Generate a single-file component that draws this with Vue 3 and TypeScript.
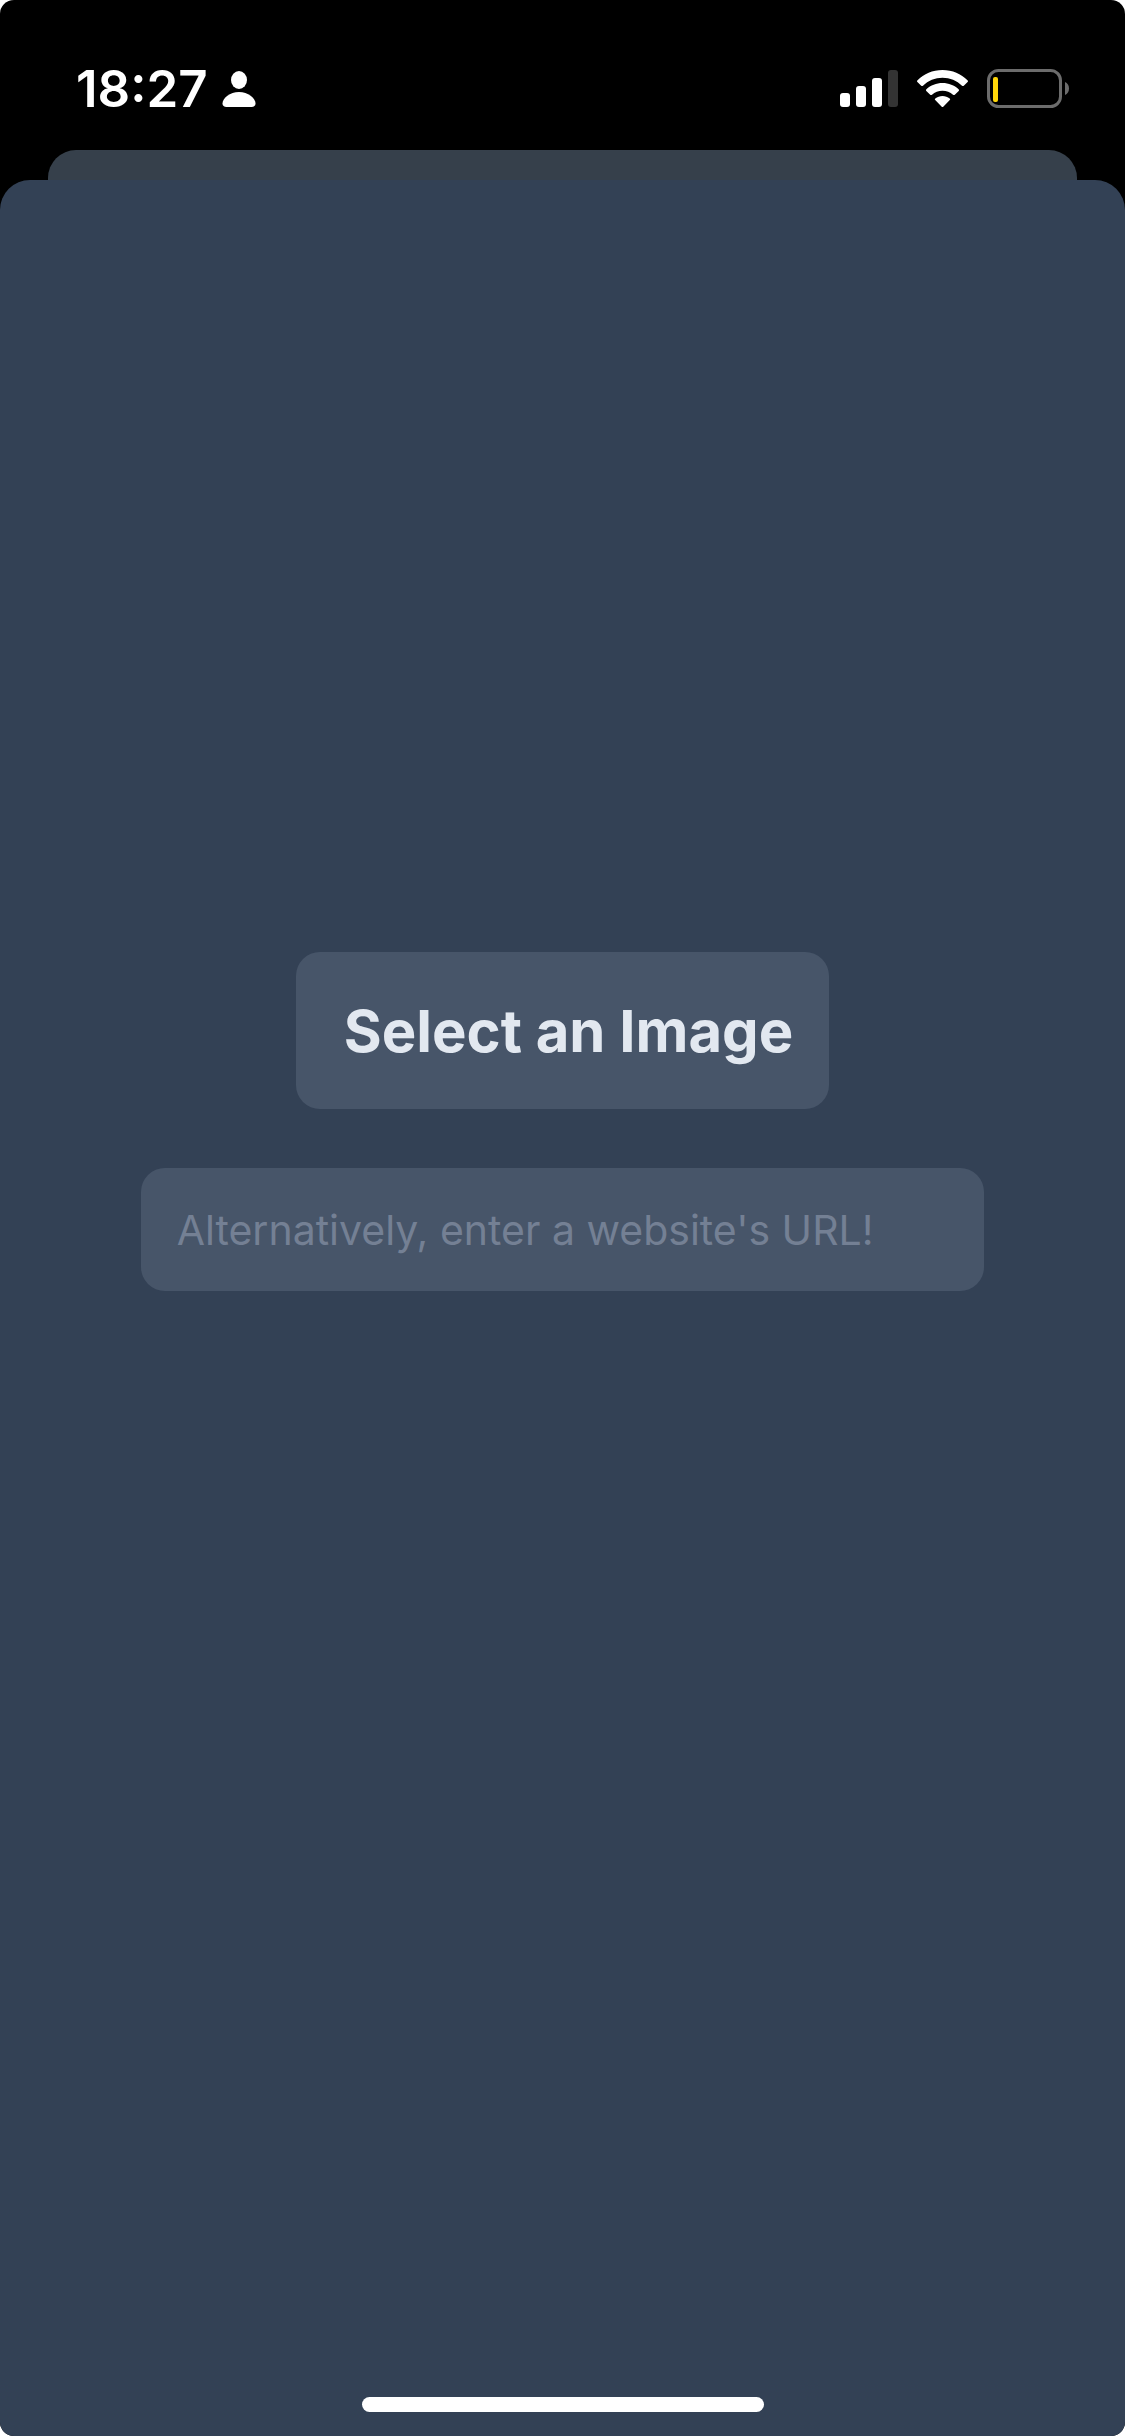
<script setup lang="ts">
import { ref } from 'vue'

const time = '18:27'
const url = ref('')
const picker = ref<HTMLInputElement | null>(null)

function selectImage(): void {
  picker.value?.click()
}
</script>

<template>
  <div class="screen">
    <header class="status">
      <div class="status-left">
        <time class="clock">{{ time }}</time>
        <svg class="person" width="34" height="36" viewBox="0 0 34 36" aria-hidden="true">
          <ellipse cx="17" cy="9" rx="8" ry="9" />
          <path d="M17 21C26 21 33.500 27 33.500 32.500C33.500 34.800 32 36 29.500 36H4.500C2 36 0.500 34.800 0.500 32.500C0.500 27 8 21 17 21Z" />
        </svg>
      </div>
      <div class="status-right">
        <svg width="58" height="38" viewBox="0 0 58 38" aria-hidden="true">
          <rect x="0" y="23" width="10" height="14" rx="3" />
          <rect x="16" y="16" width="10" height="21" rx="3" />
          <rect x="32" y="8" width="10" height="29" rx="3" />
          <rect class="dim" x="48" y="0" width="10" height="37" rx="3" />
        </svg>
        <svg width="51" height="38" viewBox="0 0 51 38" aria-hidden="true">
          <path d="M25.500 0C35.500 0 44 4 50.500 10.200C51.100 10.800 51.100 11.400 50.600 12L46.800 15.700C46.200 16.300 45.600 16.200 45 15.700C39.800 10.700 33 7.800 25.500 7.800S11.200 10.700 6 15.700C5.400 16.200 4.800 16.300 4.200 15.700L0.400 12C-0.100 11.400-0.100 10.800 0.500 10.200C7 4 15.500 0 25.500 0Z" />
          <path d="M25.500 13C31.700 13 37.300 15.300 41.600 19.200C42.200 19.800 42.200 20.400 41.700 20.900L37.800 24.700C37.200 25.300 36.600 25.200 36 24.700C33.200 22.200 29.500 20.700 25.500 20.700S17.800 22.200 15 24.700C14.400 25.200 13.800 25.300 13.200 24.700L9.300 20.900C8.800 20.400 8.800 19.800 9.400 19.200C13.700 15.300 19.300 13 25.500 13Z" />
          <path d="M25.500 26C28.200 26 30.700 26.900 32.700 28.400C33.300 28.900 33.300 29.500 32.800 30L26.500 36.400C25.800 37.100 25.200 37.100 24.500 36.400L18.200 30C17.700 29.500 17.700 28.900 18.300 28.400C20.300 26.900 22.800 26 25.500 26Z" />
        </svg>
        <svg width="83" height="40" viewBox="0 0 83 40" aria-hidden="true">
          <rect class="case" x="1.500" y="1.500" width="72" height="36" rx="10" />
          <rect class="charge" x="6" y="8" width="5" height="25" rx="2" />
          <path class="terminal" d="M78 13C80.500 14 82 16.500 82 19.500S80.500 25 78 26Z" />
        </svg>
      </div>
    </header>

    <div class="sheet-behind"></div>

    <main class="sheet">
      <form class="content" @submit.prevent>
        <input ref="picker" type="file" accept="image/*" aria-label="Image" hidden />
        <button class="select" type="button" @click="selectImage">Select an Image</button>
        <input
          v-model="url"
          class="url"
          type="url"
          aria-label="Website URL"
          placeholder="Alternatively, enter a website's URL!"
        />
      </form>
      <div class="home"></div>
    </main>
  </div>
</template>

<style>
body {
  margin: 0;
  background: #fff;
}
</style>

<style scoped>
.screen {
  display: flex;
  flex-direction: column;
  box-sizing: border-box;
  min-height: 100vh;
  overflow: hidden;
  border-radius: 14px;
  background: #000;
  color: #fff;
  font-family: Inter, "Liberation Sans", sans-serif;
}

.status {
  display: flex;
  align-items: center;
  justify-content: space-between;
  box-sizing: border-box;
  height: 150px;
  padding: 28px 55px 0 76px;
}

.status svg {
  display: block;
  fill: #fff;
}

.status-left {
  display: flex;
  align-items: center;
  gap: 14px;
}

.clock {
  font-size: 51px;
  font-weight: 600;
  line-height: 60px;
}

.status-right {
  display: flex;
  align-items: center;
  gap: 19px;
}

.status .dim {
  fill: #333;
}

.status .case {
  fill: none;
  stroke: #6c6c6c;
  stroke-width: 3px;
}

.status .charge {
  fill: #ffd60a;
}

.status .terminal {
  fill: #6c6c6c;
}

.sheet-behind {
  height: 60px;
  margin: 0 48px -30px;
  border-radius: 28px 28px 0 0;
  background: #36404b;
}

.sheet {
  display: flex;
  flex: 1;
  flex-direction: column;
  align-items: center;
  border-radius: 30px 30px 0 0;
  background: #334155;
}

.content {
  display: flex;
  flex: 1;
  flex-direction: column;
  align-items: center;
  justify-content: center;
  gap: 59px;
  box-sizing: border-box;
  width: 100%;
  padding-bottom: 334px;
}

.select {
  padding: 43px 36px 42px 48px;
  border: 0;
  border-radius: 24px;
  background: #475569;
  color: #e2e8f0;
  font-family: inherit;
  font-size: 58px;
  font-weight: 700;
  line-height: 72px;
}

.url {
  box-sizing: border-box;
  width: 75%;
  height: 123px;
  padding: 0 36px;
  border: 0;
  border-radius: 24px;
  outline: none;
  background: #475569;
  color: #e2e8f0;
  font-family: inherit;
  font-size: 41px;
}

.url::placeholder {
  color: #748094;
  opacity: 1;
}

.home {
  width: 402px;
  height: 15px;
  margin-bottom: 24px;
  border-radius: 8px;
  background: #fff;
}
</style>
